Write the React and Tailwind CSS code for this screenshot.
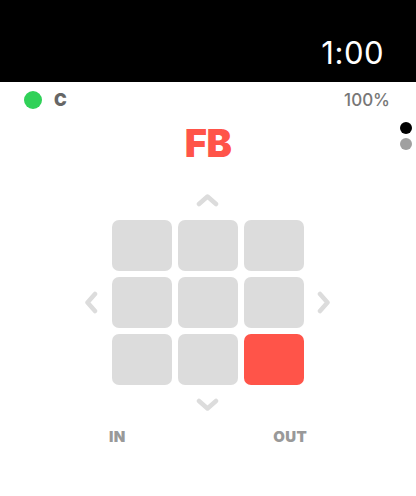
const cells = [0, 0, 0, 0, 0, 0, 0, 0, 1];

function Chevron({ dir, className }) {
  const paths = {
    up: "M3 11 L11.5 3.5 L20 11",
    down: "M3 3 L11.5 10.5 L20 3",
    left: "M11 3 L3.5 11.5 L11 20",
    right: "M3 3 L10.5 11.5 L3 20",
  };
  const vertical = dir === "up" || dir === "down";
  return (
    <svg
      width={vertical ? 23 : 14}
      height={vertical ? 14 : 23}
      viewBox={vertical ? "0 0 23 14" : "0 0 14 23"}
      className={className}
    >
      <path
        d={paths[dir]}
        fill="none"
        stroke="#DCDCDC"
        strokeWidth="4.5"
        strokeLinecap="round"
        strokeLinejoin="round"
      />
    </svg>
  );
}

export default function App() {
  return (
    <div
      className="relative w-[416px] h-[496px] bg-white overflow-hidden"
      style={{ fontFamily: "Inter, 'Liberation Sans', sans-serif" }}
    >
      <div className="h-[82px] bg-black flex items-end justify-end pr-[32px] pb-[14px]">
        <span className="text-white text-[31px] leading-none tracking-[0.5px]">1:00</span>
      </div>

      <div className="h-[36px] flex items-center justify-between pl-[24px] pr-[26px]">
        <div className="flex items-center gap-[12px]">
          <div className="w-[18px] h-[18px] rounded-full bg-[#30D158]" />
          <span className="text-[17px] font-black text-[#666666] leading-none">C</span>
        </div>
        <span className="text-[17px] font-medium text-[#777777] leading-none">100%</span>
      </div>

      <div className="flex justify-center mt-[6px]">
        <span className="text-[38px] font-black text-[#FF5449] leading-none tracking-[-0.5px]">FB</span>
      </div>

      <div className="absolute left-[400px] top-[122px] flex flex-col gap-[4px]">
        <div className="w-[12px] h-[12px] rounded-full bg-black" />
        <div className="w-[12px] h-[12px] rounded-full bg-[#A0A0A0]" />
      </div>

      <div className="flex flex-col items-center mt-[31px] pr-[1px]">
        <Chevron dir="up" />
        <div className="flex items-center mt-[13px]">
          <Chevron dir="left" className="mr-[14px]" />
          <div className="grid grid-cols-[60px_60px_60px] gap-x-[6px] gap-y-[6px]">
            {cells.map((on, i) => (
              <div
                key={i}
                className={`h-[51px] rounded-[7px] ${on ? "bg-[#FF5449]" : "bg-[#DCDCDC]"}`}
              />
            ))}
          </div>
          <Chevron dir="right" className="ml-[13px]" />
        </div>
        <Chevron dir="down" className="mt-[13px]" />
      </div>

      <div className="flex justify-between pl-[109px] pr-[109px] mt-[17px]">
        <span className="text-[15px] font-black text-[#999999] leading-none tracking-[0.3px]">IN</span>
        <span className="text-[15px] font-black text-[#999999] leading-none tracking-[0.3px]">OUT</span>
      </div>
    </div>
  );
}
